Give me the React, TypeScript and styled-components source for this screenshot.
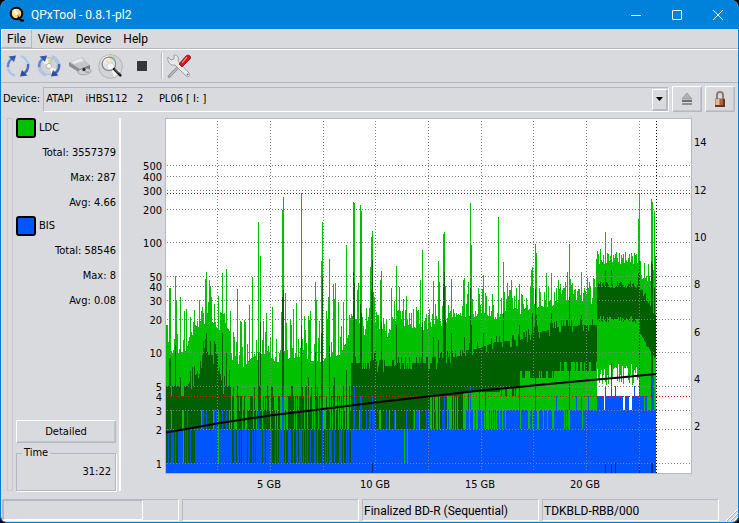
import React from "react";
import styled, { createGlobalStyle } from "styled-components";

const face = "#d9dade";
const shade = "#b4b8c4";
const light = "#ffffff";
const accent = "#0081da";

const GlobalStyle = createGlobalStyle`
  * { box-sizing: border-box; }
  html, body, #root { height: 100%; }
  body { margin: 0; background: #000; }
  button, select { font: inherit; color: inherit; }
`;

const Window = styled.div`
  display: flex;
  flex-direction: column;
  min-height: 100%;
  background: ${face};
  border: 1px solid ${accent};
  border-top: 0;
  border-radius: 8px 8px 7px 7px;
  overflow: hidden;
  color: #000;
  font: 11px/14px "DejaVu Sans Condensed", "Noto Sans", sans-serif;
`;

const TitleBar = styled.header`
  display: flex;
  align-items: center;
  height: 29px;
  padding-left: 8px;
  background: ${accent};
  color: #fff;
`;

const Title = styled.h1`
  flex: 1;
  margin: 0;
  padding-left: 6px;
  font: 12px/16px Roboto, sans-serif;
`;

const CaptionButton = styled.button`
  display: flex;
  justify-content: center;
  align-items: center;
  width: 41px;
  height: 29px;
  padding: 0;
  border: 0;
  background: none;
`;

const MenuBar = styled.nav`
  display: flex;
  height: 20px;
  border-bottom: 1px solid ${shade};
  box-shadow: 0 1px 0 ${light};
`;

const MenuItem = styled.button<{ $active?: boolean }>`
  height: 19px;
  padding: 0 5px;
  border: 1px solid;
  border-color: ${(p) => (p.$active ? `${light} ${shade} ${shade} ${light}` : "transparent")};
  background: none;
  font: 12px/16px Roboto, sans-serif;
`;

const ToolBar = styled.div`
  display: flex;
  align-items: center;
  height: 33px;
  margin-top: 1px;
  padding-left: 1px;
  border-bottom: 1px solid ${shade};
`;

const ToolButton = styled.button`
  display: flex;
  justify-content: center;
  align-items: center;
  width: 31px;
  height: 28px;
  padding: 0;
  border: 0;
  background: none;
`;

const ToolSeparator = styled.div`
  width: 2px;
  height: 26px;
  margin: 0 0 0 4px;
  border-left: 1px solid ${shade};
  border-right: 1px solid ${light};
`;

const DeviceRow = styled.div`
  display: flex;
  align-items: center;
  gap: 3px;
  padding: 3px 3px 0 2px;
`;

const DeviceBox = styled.div`
  position: relative;
  flex: 1;
  display: flex;
`;

const DeviceSelect = styled.select`
  appearance: none;
  width: 100%;
  height: 25px;
  padding: 0 22px 0 2px;
  border: 1px solid;
  border-color: ${shade} ${light} ${light} ${shade};
  border-radius: 0;
  background: ${face};
  white-space: pre;
`;

const DropArrow = styled.span`
  position: absolute;
  top: 2px;
  right: 2px;
  bottom: 2px;
  width: 15px;
  display: flex;
  align-items: center;
  justify-content: center;
  border: 1px solid;
  border-color: ${light} ${shade} ${shade} ${light};
  box-shadow: 1px 1px 0 ${shade};
  pointer-events: none;
`;

const RaisedButton = styled.button<{ $wide?: boolean }>`
  display: flex;
  align-items: center;
  justify-content: center;
  width: ${(p) => (p.$wide ? "100%" : "30px")};
  height: ${(p) => (p.$wide ? "23px" : "26px")};
  padding: 0;
  border: 1px solid;
  border-color: ${light} ${shade} ${shade} ${light};
  box-shadow: inset -1px -1px 0 #c3c6cf;
  background: ${face};
`;

const Main = styled.main`
  display: flex;
  flex: 1;
  padding: 6px 0 0 6px;
`;

const Groove = styled.div`
  width: 6px;
  margin-bottom: 8px;
  border: 1px solid #c8cad2;
`;

const SidePanel = styled.aside`
  display: flex;
  flex-direction: column;
  width: 108px;
  margin-bottom: 8px;
  padding: 0 3px;
  border-image: linear-gradient(90deg, ${shade} 50%, ${light} 50%) 2;
  border-width: 0 2px 0 0;
  border-style: solid;
`;

const Series = styled.section`
  display: flex;
  flex-direction: column;
  height: 98px;
`;

const SeriesName = styled.h2`
  display: flex;
  align-items: center;
  gap: 3px;
  height: 20px;
  margin: 0;
  font: inherit;
`;

const Swatch = styled.span<{ $color: string }>`
  width: 20px;
  height: 20px;
  border: 2px solid #000;
  border-radius: 3px;
  background: ${(p) => p.$color};
`;

const Stat = styled.div`
  height: 25px;
  padding-top: 8px;
  text-align: right;
`;

const Spacer = styled.div`
  flex: 1;
`;

const TimeBox = styled.fieldset`
  height: 45px;
  min-width: 0;
  margin: 3px 0 0;
  padding: 5px 4px 0;
  border: 1px solid ${shade};
  box-shadow: 1px 1px 0 ${light};
  text-align: right;
`;

const TimeLegend = styled.legend`
  margin-left: 1px;
  padding: 0 2px;
  text-align: left;
`;

const ChartArea = styled.div`
  flex: 1;
  min-width: 0;
`;

const ChartSvg = styled.svg`
  display: block;
  width: 100%;
  height: auto;
  font: 11px "DejaVu Sans Condensed", "Noto Sans", sans-serif;
`;

const StatusBar = styled.footer`
  display: grid;
  grid-template-columns: repeat(4, 1fr) 16px;
  gap: 3px;
  height: 23px;
  padding: 0 0 1px 1px;
`;

const StatusCell = styled.div`
  height: 22px;
  padding: 2px 1px 0;
  border: 1px solid;
  border-color: ${shade} ${light} ${light} ${shade};
  font: 12px/18px Roboto, sans-serif;
  white-space: nowrap;
`;

const ProgressCell = styled(StatusCell)`
  padding: 0;
`;

const ProgressTrack = styled.div`
  width: 80%;
  height: 20px;
  border: 1px solid;
  border-color: ${shade} ${light} ${light} ${shade};
`;

const Grip = styled.svg`
  align-self: end;
  justify-self: end;
`;

/* ---------- chart data ---------- */

type Points = [number, number][];

const FIRST = 166;
const LAST = 655;
const BASE = 473;

const lerp = (points: Points, x: number) => {
  for (let i = 1; i < points.length; i++) {
    const [x0, y0] = points[i - 1];
    const [x1, y1] = points[i];
    if (x <= x1) return y0 + ((y1 - y0) * (x - x0)) / (x1 - x0);
  }
  return points[points.length - 1][1];
};

const noise = (x: number, seed: number) => {
  const v = Math.sin(x * 12.9898 + seed * 78.233) * 43758.5453;
  return v - Math.floor(v);
};

const ldcBase: Points = [
  [166, 330], [172, 347], [178, 348], [187, 345], [196, 332], [203, 318], [211, 313], [217, 326], [221, 320],
  [228, 328], [231, 356], [244, 360], [252, 350], [258, 356], [266, 344], [275, 356], [300, 350], [318, 356],
  [341, 347], [346, 335], [352, 315], [357, 315], [364, 328], [371, 314], [379, 322], [387, 330], [396, 313],
  [406, 320], [418, 322], [428, 325], [436, 319], [445, 320], [452, 311], [462, 309], [472, 312], [484, 306],
  [495, 314], [508, 302], [519, 308], [530, 302], [540, 300], [550, 301], [558, 296], [568, 293], [585, 294],
  [595, 300],
];

const ldcPeaks: Points = [
  [166, 325], [167, 325], [169, 288], [170, 288], [175, 276], [176, 300], [180, 297], [184, 311], [186, 309],
  [190, 317], [194, 310], [199, 300], [201, 311], [205, 279], [206, 272], [209, 280], [210, 286], [211, 297],
  [214, 304], [218, 296], [222, 273], [226, 269], [230, 311], [233, 332], [237, 289], [241, 322], [245, 322],
  [249, 305], [252, 277], [256, 340], [258, 222], [260, 256], [263, 321], [266, 313], [270, 337], [272, 307],
  [282, 210], [283, 197], [285, 293], [290, 320], [293, 309], [296, 303], [301, 193], [304, 316], [310, 311],
  [315, 282], [316, 300], [321, 261], [322, 222], [326, 311], [328, 297], [329, 259], [333, 284], [334, 299],
  [335, 283], [338, 302], [343, 302], [346, 245], [353, 202], [354, 203], [357, 290], [358, 283], [360, 205],
  [361, 211], [370, 267], [371, 237], [372, 231], [373, 292], [374, 297], [380, 280], [381, 271], [391, 288],
  [396, 266], [399, 287], [403, 299], [406, 296], [420, 280], [422, 250], [433, 281], [438, 261], [439, 282],
  [443, 234], [444, 232], [445, 286], [451, 279], [463, 280], [464, 278], [468, 282], [470, 203], [471, 245],
  [478, 288], [482, 289], [483, 275], [486, 296], [492, 294], [498, 217], [503, 262], [507, 283], [508, 296],
  [510, 290], [511, 280], [514, 296], [516, 288], [519, 284], [521, 294], [526, 298], [530, 287], [531, 270],
  [532, 267], [535, 244], [536, 253], [540, 292], [546, 273], [551, 273], [554, 292], [556, 288], [559, 289],
  [562, 290], [564, 288], [565, 282], [567, 272], [569, 244], [570, 279], [574, 290], [577, 291], [578, 289],
  [581, 272], [583, 293], [588, 288], [589, 282], [590, 287], [593, 278], [594, 279], [595, 287], [596, 259],
  [597, 251], [600, 249], [605, 232], [611, 238], [638, 219], [639, 193], [640, 261], [644, 263], [648, 264],
  [651, 199], [652, 202], [653, 270], [654, 211], [655, 256],
];

const avgBase: Points = [
  [166, 386], [187, 386], [192, 377], [196, 374], [200, 361], [205, 345], [208, 355], [217, 354], [221, 380],
  [224, 386], [230, 386],
];

const avgLate: Points = [
  [351, 363], [369, 363], [374, 352], [377, 366], [394, 366], [396, 363], [437, 363], [438, 358], [462, 356],
  [464, 350], [480, 348], [495, 342], [520, 340], [532, 333], [545, 331], [560, 326], [595, 325],
];

const avgPeaks: Points = [
  [169, 358], [170, 358], [175, 345], [180, 377], [205, 339], [206, 333], [210, 341], [214, 341], [222, 333],
  [226, 353], [229, 370], [237, 386], [260, 322], [258, 353], [282, 297], [283, 290], [301, 325], [308, 377],
  [315, 352], [322, 277], [321, 333], [329, 346], [333, 386], [334, 377], [346, 370], [353, 272], [354, 283],
  [360, 304], [361, 313], [371, 290], [372, 260], [381, 322], [396, 325], [422, 322], [433, 337], [438, 340],
  [443, 284], [444, 272], [445, 320], [451, 333], [464, 337], [470, 288], [471, 325], [483, 333], [503, 313],
  [519, 325], [532, 313], [535, 289], [536, 315], [551, 313], [569, 297], [581, 315], [605, 271], [611, 270],
  [638, 273], [639, 261], [644, 294], [651, 261], [652, 264], [654, 287],
];

const bisPeaks: Points = [
  [187, 410], [202, 410], [203, 410], [206, 410], [214, 410], [216, 410], [222, 410], [226, 410], [258, 410],
  [282, 396], [283, 386], [301, 410], [315, 410], [322, 410], [353, 410], [354, 386], [360, 396], [361, 396],
  [372, 396], [444, 396], [470, 386], [519, 396], [535, 386], [556, 396], [576, 396], [581, 396], [588, 396],
  [605, 386], [611, 363], [615, 386], [634, 386], [639, 363], [652, 377], [653, 377],
];

const whiteGaps = [604, 623, 624, 629, 630, 631, 648, 649];
const bottomMarks = [372, 605, 611, 615, 639, 651, 652];

const lookup = (points: Points) => new Map<number, number>(points);
const ldcMap = lookup(ldcPeaks);
const avgMap = lookup(avgPeaks);
const bisMap = lookup(bisPeaks);

const columns = Array.from({ length: LAST - FIRST + 1 }, (_, i) => {
  const x = FIRST + i;
  const a = noise(x, 1);
  const b = noise(x, 2);
  const c = noise(x, 3);

  let ldcTop = lerp(ldcBase, x) + 7 - a * a * 24;
  if (x >= 230 && x < 351) ldcTop = lerp(ldcBase, x) + 7 - a * a * a * 50;
  if (x >= 596) ldcTop = 252 + a * 12;
  if (x >= 640) ldcTop = 273 + a * 10;
  ldcTop = ldcMap.get(x) ?? ldcTop;

  let ldcBottom = BASE;
  if (x >= 597 && x < 639) ldcBottom = b > 0.6 ? 363 + c * 10 : 374 + c * 12;

  let avgTop: number;
  if (x < 230) avgTop = lerp(avgBase, x) + (b > 0.8 ? 10 : 0) - (b < 0.15 ? 10 : 0);
  else if (x < 351) avgTop = [429, 410, 429, 396, 410, 429, 396, 386][Math.floor(b * 8)];
  else if (x < 596) avgTop = lerp(avgLate, x) + (b > 0.8 ? 6 : 0) - (b < 0.25 ? 6 : 0);
  else if (x === 596) avgTop = 325;
  else if (x < 640) avgTop = 281 + b * 7;
  else avgTop = 284 + (x - 640) * 1.8 + b * 8;
  avgTop = avgMap.get(x) ?? avgTop;

  let avgBottom: number;
  if (x < 230) avgBottom = b > 0.88 ? 410 : 463;
  else if (x < 351) avgBottom = 463;
  else if (x < 425) avgBottom = c > 0.9 ? 410 : 429;
  else if (x < 463) avgBottom = c > 0.5 ? 429 : 396;
  else if (x < 500) avgBottom = c > 0.8 ? 410 : 392;
  else if (x < 520) avgBottom = c > 0.7 ? 396 : 387;
  else if (x < 560) avgBottom = c > 0.5 ? 378 : 371;
  else if (x < 597) avgBottom = c > 0.4 ? 371 : 362;
  else if (x < 639) avgBottom = 316 + c * 7;
  else avgBottom = 333 + (x - 640) * 1.6 + c * 4;
  if ([535, 569, 639, 651, 652].includes(x)) avgBottom = 410;

  let bisTop = 429;
  if (x < 195) bisTop = a > 0.5 ? 463 : 429;
  else if (x < 232) bisTop = a > 0.93 ? 463 : 429;
  else if (x < 351) bisTop = c > 0.45 ? 463 : 429;
  else if (x < 463) bisTop = a > 0.82 ? 410 : 429;
  else if (x < 480) bisTop = a > 0.5 ? 410 : 429;
  else if (x < 520) bisTop = a > 0.28 ? 410 : 429;
  else if (x < 587) bisTop = a > 0.22 ? 410 : 429;
  else if (x < 597) bisTop = 410;
  else bisTop = whiteGaps.includes(x) || (x > 639 && a > 0.6) ? 410 : 396;
  if (x === 404 || x === 407) bisTop = 463;
  bisTop = bisMap.get(x) ?? bisTop;

  return { x, ldcTop, ldcBottom, avgTop, avgBottom, bisTop };
});

const bars = (pick: (c: (typeof columns)[number]) => [number, number]) =>
  columns
    .map((col) => {
      const [top, bottom] = pick(col).map(Math.round);
      return bottom > top ? `M${col.x} ${top}h1V${bottom}h-1z` : "";
    })
    .join("");

const ldcPath = bars((c) => [c.ldcTop, c.ldcBottom]);
const avgPath = bars((c) => [c.avgTop, c.avgBottom]);
const bisPath = bars((c) => [c.bisTop, BASE]);

const gridX = [217, 270, 323, 375, 428, 481, 533, 586, 639];
const gridY = [165, 176, 190, 209, 242, 276, 286, 300, 319, 352, 386, 410, 429, 463];

const countLabels: [string, number][] = [
  ["500", 165], ["400", 176], ["300", 190], ["200", 209], ["100", 242], ["50", 276], ["40", 286], ["30", 300],
  ["20", 319], ["10", 352], ["5", 386], ["4", 396], ["3", 410], ["2", 429], ["1", 463],
];
const speedLabels: [string, number][] = [
  ["14", 142], ["12", 190], ["10", 237], ["8", 284], ["6", 332], ["4", 379], ["2", 426],
];
const sizeLabels: [string, number][] = [
  ["5 GB", 269], ["10 GB", 375], ["15 GB", 480], ["20 GB", 585],
];

function Chart() {
  return (
    <ChartSvg viewBox="121 118 617 376" role="img" aria-label="LDC and BIS error rates by disc position">
      <g shapeRendering="crispEdges">
        <rect x="165" y="118" width="527" height="356" fill={shade} />
        <rect x="166" y="119" width="525" height="354" fill="#fff" />
        <path d={ldcPath} fill="#00c000" />
        <path d={avgPath} fill="#006000" />
        <path d={bisPath} fill="#0055ff" />
        {bottomMarks.map((x) => (
          <rect key={x} x={x} y="463" width="1" height="10" fill="#002b80" />
        ))}
        <g stroke="#808080" strokeDasharray="1 2">
          {gridY.map((y) => (
            <path key={y} d={`M167 ${y + 0.5}H690`} />
          ))}
          {gridX.map((x) => (
            <path key={x} d={`M${x + 0.5} 121V472`} />
          ))}
        </g>
        <path d="M167 193.5H690" stroke="#c00000" strokeDasharray="1 2" />
        <path d="M167 396.5H690" stroke="#ff0000" strokeDasharray="1 2" />
        <path d="M656.5 121V473" stroke="#000" strokeDasharray="1 2" />
      </g>
      <path
        d="M166 432.500L192 428L217 423.500L270 415.500L323 409L375 402.500L428 396.500L481 390.500L519 387L533 385.500L586 380.500L620 377.500L656 374"
        fill="none"
        stroke="#000"
        strokeWidth="2"
      />
      <g textAnchor="end">
        {countLabels.map(([text, y]) => (
          <text key={text} x="162" y={y + 5}>{text}</text>
        ))}
      </g>
      {speedLabels.map(([text, y]) => (
        <text key={text} x="694" y={y + 4}>{text}</text>
      ))}
      <g textAnchor="middle">
        {sizeLabels.map(([text, x]) => (
          <text key={text} x={x} y="488">{text}</text>
        ))}
      </g>
    </ChartSvg>
  );
}

/* ---------- icons ---------- */

const AppIcon = () => (
  <svg width="16" height="17" viewBox="0 0 16 17">
    <circle cx="7.500" cy="7.500" r="5.800" fill="#f9dc8c" stroke="#000" strokeWidth="2" />
    <path d="M7.500 7.500L3 5A5 5 0 0 1 7 3z" fill="#fff6d8" />
    <path d="M7.500 7.500L12 9A5 5 0 0 1 8 12z" fill="#f3a04c" />
    <circle cx="7.500" cy="7.500" r="1.600" fill="#fff" />
    <path d="M9 11l3 3.500h3" stroke="#000" strokeWidth="2" fill="none" />
  </svg>
);

const arcs = (
  <g fill="none" strokeWidth="2.400">
    <path d="M9 21.800A10.200 10.200 0 0 1 2 10" stroke="#a9c5ec" />
    <path d="M2 13A10.200 10.200 0 0 1 6 4.500" stroke="#5f88d0" />
    <path d="M15 2.200A10.200 10.200 0 0 1 22 14" stroke="#a9c5ec" />
    <path d="M22 10A10.200 10.200 0 0 1 18 19.500" stroke="#4568b8" />
    <path d="M2.500 2.500L10 1.500 8 8z" fill="#3558ac" />
    <path d="M21.500 21.500L14 22.500 16 16z" fill="#2c4da0" />
  </g>
);

const Disc = ({ r = 8 }: { r?: number }) => (
  <g>
    <circle cx="12" cy="12" r={r} fill="#d2d3d6" stroke="#a5a7ab" strokeWidth=".7" />
    <path d={`M12 12L${12 - r * 0.8} ${12 - r * 0.5}A${r} ${r} 0 0 1 ${12 - r * 0.2} ${12 - r * 0.95}z`} fill="#f4f4f6" />
    <path d={`M12 12L${12 - r * 0.2} ${12 - r * 0.95}h${r * 0.4}z`} fill="#e3d9a0" />
    <path d={`M12 12L${12 + r * 0.2} ${12 - r * 0.95}l${r * 0.3} ${r * 0.15}z`} fill="#aed8b8" />
    <path d={`M12 12L${12 + r * 0.85} ${12 + r * 0.4}L${12 + r * 0.3} ${12 + r * 0.9}z`} fill="#f8f8fa" />
    <circle cx="12" cy="12" r={r * 0.3} fill="#fff" stroke="#999" strokeWidth=".7" />
  </g>
);

const RefreshIcon = () => <svg width="24" height="24" viewBox="0 0 24 24">{arcs}</svg>;
const DiscScanIcon = () => (
  <svg width="24" height="24" viewBox="0 0 24 24"><Disc r={8.5} />{arcs}</svg>
);
const DriveIcon = () => (
  <svg width="24" height="24" viewBox="0 0 24 24">
    <path d="M1 8L14 3l8 8-10 4z" fill="#c4c5c9" />
    <path d="M3 8l10-4 3 3-10 3z" fill="#e6e7ea" />
    <path d="M1 8v4l11 7v-4z" fill="#8b8d92" />
    <path d="M12 15l10-4v4l-10 4z" fill="#77797f" />
    <path d="M10 17c3-3 9-4 13-1v2c-4 3-9 4-13 1z" fill="#cfd0d3" stroke="#8b8d92" strokeWidth=".7" />
    <circle cx="16" cy="15.500" r="1.700" fill="#333" />
    <path d="M17 18h4" stroke="#b98379" />
  </svg>
);
const SearchDiscIcon = () => (
  <svg width="25" height="25" viewBox="0 0 24 24">
    <Disc r={11.4} />
    <circle cx="10.500" cy="9.500" r="6.500" fill="#f1f1f3" fillOpacity=".55" stroke="#8b8d91" strokeWidth="1.200" />
    <path d="M7 8l2-3 2 4z" fill="#e7dca0" />
    <path d="M15.500 14.500l6 6" stroke="#222" strokeWidth="2.600" strokeLinecap="round" />
    <path d="M16 14.500l4 4" stroke="#999" strokeWidth=".8" />
  </svg>
);
const StopIcon = () => (
  <svg width="12" height="12"><rect x="1" y="1" width="10" height="10" fill="#343638" /></svg>
);
const ToolsIcon = () => (
  <svg width="26" height="26" viewBox="0 0 26 26">
    <path d="M3 23.500l12-12" stroke="#85888d" strokeWidth="2.600" strokeLinecap="round" />
    <path d="M3 23.500l12-12" stroke="#eceef0" strokeWidth="1" />
    <path d="M2 4l3 3 3-1V2c4 0 5 3 4 6l11 12c2 3-1 5-3 3L9 12C4 13 1 9 2 4z" fill="#e6e8ea" stroke="#96999d" strokeWidth=".9" />
    <path d="M13 11l7-8c2-2 6 0 4 3l-8 8z" fill="#d3151d" stroke="#8f0a10" strokeWidth=".8" />
    <path d="M16 10l5-6" stroke="#ff8383" strokeWidth="1.200" />
    <circle cx="21.500" cy="21.500" r="1" fill="#777" />
  </svg>
);
const EjectIcon = () => (
  <svg width="12" height="14" viewBox="0 0 12 14">
    <path d="M6 1l5 6H1z" fill="#b0b2b6" stroke="#85878b" strokeWidth=".6" />
    <path d="M1 8h10v2H1z" fill="#6c6e72" />
    <path d="M1 11h10v2H1z" fill="#8d8f93" />
  </svg>
);
const LockIcon = () => (
  <svg width="12" height="17" viewBox="0 0 12 17">
    <path d="M3 8V4c0-4 6-4 6 0v4" fill="none" stroke="#8d7c72" strokeWidth="2" />
    <rect x="1" y="7.500" width="10" height="8.500" rx="1" fill="#a8653f" />
    <path d="M1.500 8h4v7.500h-4z" fill="#e1b798" />
    <path d="M9 8h2v8H9zM1 14h10v2H1z" fill="#6b3520" />
  </svg>
);

const tools = [
  ["Refresh devices", RefreshIcon],
  ["Scan media", DiscScanIcon],
  ["Drive", DriveIcon],
  ["Media info", SearchDiscIcon],
  ["Stop", StopIcon],
] as const;

const series = [
  { name: "LDC", color: "#00c000", total: "3557379", max: "287", avg: "4.66" },
  { name: "BIS", color: "#0055ff", total: "58546", max: "8", avg: "0.08" },
];

export default function App() {
  return (
    <>
      <GlobalStyle />
      <Window>
        <TitleBar>
          <AppIcon />
          <Title>QPxTool - 0.8.1-pl2</Title>
          <CaptionButton aria-label="Minimize">
            <svg width="10" height="10"><path d="M0 5.500h10" stroke="#fff" /></svg>
          </CaptionButton>
          <CaptionButton aria-label="Maximize">
            <svg width="10" height="10"><rect x=".5" y=".5" width="9" height="9" rx=".5" fill="none" stroke="#fff" /></svg>
          </CaptionButton>
          <CaptionButton aria-label="Close">
            <svg width="10" height="10"><path d="M0 0l10 10M10 0L0 10" stroke="#fff" /></svg>
          </CaptionButton>
        </TitleBar>
        <MenuBar>
          <MenuItem $active>File</MenuItem>
          <MenuItem>View</MenuItem>
          <MenuItem>Device</MenuItem>
          <MenuItem>Help</MenuItem>
        </MenuBar>
        <ToolBar>
          {tools.map(([label, Icon]) => (
            <ToolButton key={label} aria-label={label}><Icon /></ToolButton>
          ))}
          <ToolSeparator />
          <ToolButton aria-label="Preferences"><ToolsIcon /></ToolButton>
        </ToolBar>
        <DeviceRow>
          <label htmlFor="device">Device:</label>
          <DeviceBox>
            <DeviceSelect id="device">
              <option>{"ATAPI\u00a0\u00a0\u00a0 iHBS112\u00a0\u00a0 2\u00a0\u00a0\u00a0\u00a0 PL06 [ I: ]"}</option>
            </DeviceSelect>
            <DropArrow>
              <svg width="7" height="4"><path d="M0 0h7L3.500 4z" fill="#000" /></svg>
            </DropArrow>
          </DeviceBox>
          <RaisedButton aria-label="Eject"><EjectIcon /></RaisedButton>
          <RaisedButton aria-label="Lock"><LockIcon /></RaisedButton>
        </DeviceRow>
        <Main>
          <Groove />
          <SidePanel>
            {series.map((s) => (
              <Series key={s.name}>
                <SeriesName><Swatch $color={s.color} />{s.name}</SeriesName>
                <Stat>Total: {s.total}</Stat>
                <Stat>Max: {s.max}</Stat>
                <Stat>Avg: {s.avg}</Stat>
              </Series>
            ))}
            <Spacer />
            <RaisedButton $wide>Detailed</RaisedButton>
            <TimeBox>
              <TimeLegend>Time</TimeLegend>
              31:22
            </TimeBox>
          </SidePanel>
          <ChartArea><Chart /></ChartArea>
        </Main>
        <StatusBar>
          <ProgressCell><ProgressTrack role="progressbar" aria-label="Progress" /></ProgressCell>
          <StatusCell />
          <StatusCell>Finalized BD-R (Sequential)</StatusCell>
          <StatusCell>TDKBLD-RBB/000</StatusCell>
          <Grip width="13" height="13">
            <path d="M1 13L13 1M5 13l8-8M9 13l4-4" stroke="#fff" />
            <path d="M2 13L13 2M6 13l7-7M10 13l3-3" stroke="#a4a8b4" />
          </Grip>
        </StatusBar>
      </Window>
    </>
  );
}
